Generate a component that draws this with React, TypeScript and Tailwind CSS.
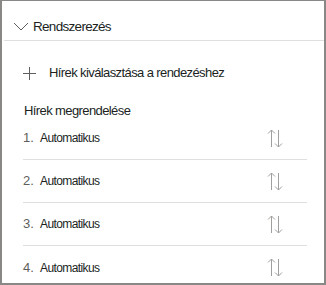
import React from "react";

const font = { fontFamily: '"Liberation Sans", Arial, sans-serif' };

function Chevron() {
  return (
    <svg width="16" height="9" viewBox="0 0 16 9" fill="none">
      <path d="M1 1 L8 8 L15 1" stroke="#605e5c" strokeWidth="1" />
    </svg>
  );
}

function Plus() {
  return (
    <svg width="13" height="13" viewBox="0 0 13 13" fill="none">
      <path d="M6.5 0 V13 M0 6.5 H13" stroke="#605e5c" strokeWidth="1" />
    </svg>
  );
}

function SortIcon() {
  return (
    <svg width="16" height="19" viewBox="0 0 16 19" fill="none">
      <path d="M4.5 1 V18 M1 4.5 L4.5 1 L8 4.5" stroke="#a19f9d" strokeWidth="1" />
      <path d="M11.5 1 V18 M8 14.5 L11.5 18 L15 14.5" stroke="#a19f9d" strokeWidth="1" />
    </svg>
  );
}

const rows = [1, 2, 3, 4];

export default function App() {
  return (
    <div
      className="w-[326px] h-[285px] bg-white border-t border-l-2 border-r-2 border-b-2 border-[#8a8886] overflow-hidden text-[#323130]"
      style={font}
    >
      <div className="flex h-[39px] items-center gap-[4px] pl-[11px] pt-[12px]">
        <Chevron />
        <span className="text-[13.5px] leading-[18px] tracking-[-0.7px] text-[#201f1e]">
          Rendszerezés
        </span>
      </div>
      <div className="ml-[2px] h-px bg-[#e1dfdd]" />

      <div className="mt-[22px] flex h-[20px] items-center gap-[13px] pl-[21px]">
        <Plus />
        <span className="text-[13px] leading-[20px] tracking-[-0.6px] text-[#201f1e]">
          Hírek kiválasztása a rendezéshez
        </span>
      </div>

      <div className="mt-[21px] pl-[22px] text-[13px] leading-[13px] tracking-[-0.6px] text-[#201f1e]">
        Hírek megrendelése
      </div>

      <div className="ml-[21px] mr-[17px]">
        {rows.map((n, i) => (
          <div
            key={n}
            className={
              "flex h-[43px] items-center justify-between " +
              (i < rows.length - 1 ? "border-b border-[#e1dfdd]" : "")
            }
          >
            <div className="flex items-center">
              <span className="w-[17px] text-[13px] text-[#605e5c]">{n}.</span>
              <span className="text-[12px] tracking-[-0.6px] text-[#201f1e]">Automatikus</span>
            </div>
            <div className="mr-[24px] flex">
              <SortIcon />
            </div>
          </div>
        ))}
      </div>
    </div>
  );
}
